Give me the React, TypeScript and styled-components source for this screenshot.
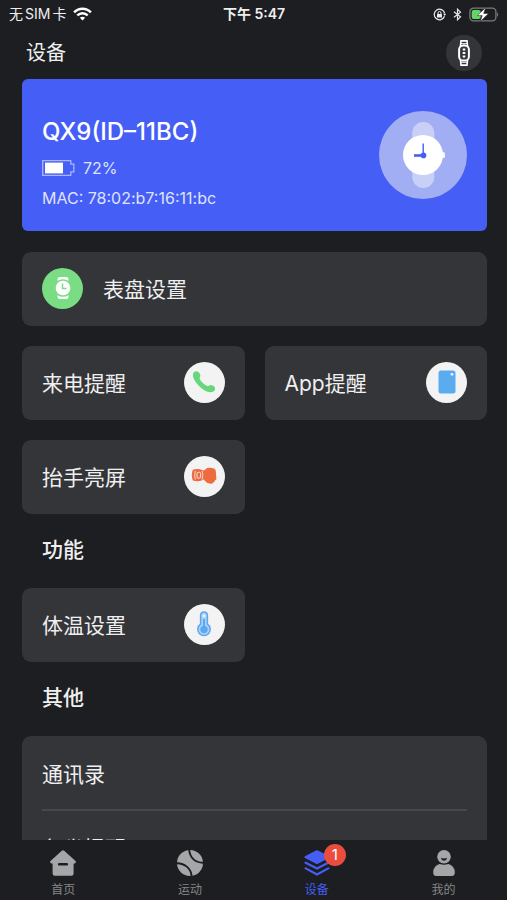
import React from "react";
import styled, { createGlobalStyle } from "styled-components";

const GlobalStyle = createGlobalStyle`
  * { box-sizing: border-box; }
  body {
    margin: 0;
    background: #1d1e21;
    color: #efeff0;
    font-family: Inter, "Noto Sans CJK SC", sans-serif;
  }
  button { font: inherit; color: inherit; border: 0; padding: 0; background: none; cursor: pointer; }
  h1, h2, p { margin: 0; }
  svg { display: block; flex: none; }
`;

const Screen = styled.div`
  height: 100vh;
  display: flex;
  flex-direction: column;
  overflow: hidden;
`;

const StatusBar = styled.div`
  flex: none;
  height: 28px;
  padding: 0 8px 0 9px;
  display: grid;
  grid-template-columns: 1fr auto 1fr;
  align-items: center;
  font-size: 14px;
  line-height: 20px;
`;

const StatusGroup = styled.div<{ $end?: boolean }>`
  display: flex;
  align-items: center;
  gap: 7px;
  justify-content: ${(p) => (p.$end ? "flex-end" : "flex-start")};
`;

const Carrier = styled.span`
  display: flex;
  gap: 2px;
`;

const Clock = styled.time`
  font-weight: 600;
`;

const Header = styled.header`
  flex: none;
  height: 51px;
  padding: 0 25px 2px 26px;
  display: flex;
  align-items: center;
  justify-content: space-between;
`;

const Title = styled.h1`
  font-size: 20px;
  line-height: 28px;
  font-weight: 400;
`;

const BandButton = styled.button`
  width: 36px;
  height: 36px;
  border-radius: 50%;
  background: #343538;
  display: grid;
  place-items: center;
`;

const Content = styled.main`
  flex: 1;
  min-height: 0;
  overflow: hidden;
  padding: 0 20px 0 22px;
`;

const DeviceCard = styled.section`
  height: 152px;
  margin-bottom: 21px;
  padding: 0 20px;
  border-radius: 6px;
  background: #455ef5;
  display: flex;
  align-items: center;
  justify-content: space-between;
`;

const DeviceInfo = styled.div`
  padding-top: 14px;
  display: flex;
  flex-direction: column;
  gap: 6px;
`;

const DeviceName = styled.h2`
  font-size: 24px;
  line-height: 36px;
  font-weight: 500;
  color: #fff;
`;

const DeviceLine = styled.p`
  display: flex;
  align-items: center;
  gap: 8px;
  font-size: 16px;
  line-height: 24px;
  color: #dfe3fd;
`;

const Tiles = styled.div`
  display: grid;
  grid-template-columns: 1fr 1fr;
  gap: 20px;
`;

const Tile = styled.button<{ $wide?: boolean }>`
  grid-column: ${(p) => (p.$wide ? "1 / -1" : "auto")};
  height: 74px;
  padding: 0 20px 2px;
  border-radius: 9px;
  background: #343538;
  display: flex;
  align-items: center;
  justify-content: ${(p) => (p.$wide ? "flex-start" : "space-between")};
  gap: 20px;
  font-size: 21px;
  line-height: 30px;
`;

const TileLabel = styled.span`
  padding-top: 3px;
`;

const Disc = styled.span<{ $color?: string }>`
  width: 41px;
  height: 41px;
  border-radius: 50%;
  background: ${(p) => p.$color ?? "#f3f3f3"};
  display: grid;
  place-items: center;
`;

const SectionTitle = styled.h2`
  height: 74px;
  padding: 0 20px 3px;
  display: flex;
  align-items: center;
  font-size: 21px;
  line-height: 30px;
  font-weight: 500;
`;

const List = styled.div`
  padding: 2px 20px 0;
  border-radius: 9px;
  background: #343538;
`;

const ListRow = styled.button`
  width: 100%;
  height: 73px;
  padding-top: 2px;
  display: flex;
  align-items: center;
  border-bottom: 2px solid #47484b;
  font-size: 21px;
  line-height: 30px;

  &:last-child { border-bottom: 0; }
`;

const TabBar = styled.nav`
  flex: none;
  height: 60px;
  display: grid;
  grid-template-columns: repeat(4, 1fr);
`;

const Tab = styled.button<{ $active?: boolean }>`
  display: flex;
  flex-direction: column;
  align-items: center;
  gap: 4px;
  padding-top: 10px;
  font-size: 12px;
  line-height: 20px;
  color: ${(p) => (p.$active ? "#455ef5" : "#858689")};
`;

const TabIcon = styled.span`
  position: relative;
  color: #a5a6a8;
`;

const Badge = styled.span`
  position: absolute;
  top: -6px;
  left: 20px;
  width: 22px;
  height: 22px;
  border-radius: 50%;
  background: #ea4d3e;
  color: #fff;
  font-size: 15px;
  line-height: 22px;
  text-align: center;
`;

const WifiIcon = () => (
  <svg width="19" height="14" viewBox="0 0 19 14" fill="none" stroke="#fff" strokeWidth="2.5">
    <path d="M1.1 5.3C6 .4 13 .4 17.9 5.3" />
    <path d="M4.3 8.4c3-2.9 7.4-2.9 10.4 0" />
    <path d="M9.5 13.4 6.9 10.7c1.5-1.4 3.7-1.4 5.2 0z" fill="#fff" stroke="none" />
  </svg>
);

const RotationLockIcon = () => (
  <svg width="13" height="13" viewBox="0 0 13 13" fill="none" stroke="#ededed">
    <path d="M11.7 5.3A5.3 5.3 0 1 0 11.5 8.3" strokeWidth="1.2" />
    <path d="M10 5.7h3l-1.2 2.4z" fill="#ededed" stroke="none" />
    <rect x="4" y="6" width="5" height="3.6" rx=".6" fill="#ededed" stroke="none" />
    <path d="M5 6V5a1.5 1.5 0 0 1 3 0v1" strokeWidth="1" />
  </svg>
);

const BluetoothIcon = () => (
  <svg width="9" height="13" viewBox="0 0 9 13" fill="none" stroke="#e4e4e4" strokeWidth="1.2">
    <path d="m1 3.7 6.5 5.2-3 2.9V1.2l3 2.9L1 9.3" />
  </svg>
);

const ChargingIcon = () => (
  <svg width="30" height="15" viewBox="0 0 30 15">
    <rect x=".9" y="1.2" width="26" height="12.6" rx="3.6" fill="none" stroke="#7b7c7e" strokeWidth="1.3" />
    <path d="M28 5.200q2.200 2.300 0 4.600z" fill="#7b7c7e" />
    <rect x="2.700" y="3" width="9" height="9" rx="2" fill="#62d665" />
    <path d="M16.700.4 8.400 8.600h4.800l-2 6 8.400-8.200h-4.900z" fill="#fff" stroke="#1d1e21" strokeWidth=".5" />
  </svg>
);

const BandIcon = () => (
  <svg width="14" height="26" viewBox="0 0 14 26" fill="none" stroke="#fff">
    <path d="M3.4 6.5 4 .9h6l.6 5.600M3.4 19.500l.6 5.600h6l.6-5.600" strokeWidth="1.6" />
    <path d="M3.500 3.700h7M3.500 22.300h7" strokeWidth="1" />
    <rect x="2.100" y="5.400" width="9.800" height="15.200" rx="4.200" strokeWidth="2" />
    <path d="M5.700 9.400h2.600M5.700 13h2.600M5.700 16.600h2.600" strokeWidth="2" />
  </svg>
);

const BatteryIcon = () => (
  <svg width="33" height="16" viewBox="0 0 33 16">
    <path d="M.7.7H28.800v3.500h3v7.600h-3v3.500H.7z" fill="none" stroke="#aab5fb" strokeWidth="1.300" />
    <rect x="3" y="2.600" width="18" height="10.800" fill="#fff" />
  </svg>
);

const WatchPicture = () => (
  <svg width="88" height="88" viewBox="0 0 88 88">
    <circle cx="44" cy="44" r="44" fill="#a2aef3" />
    <rect x="33.300" y="11" width="22" height="66" rx="11" fill="#c9d0f8" />
    <rect x="62" y="41" width="4" height="6" rx="1.500" fill="#f3f5ff" />
    <circle cx="44" cy="44" r="20" fill="#fff" />
    <path d="M44.200 32.500v12" stroke="#455ef5" fill="none" strokeWidth="1.400" />
    <path d="M44 44.500h-9" stroke="#455ef5" fill="none" strokeWidth="2.600" />
    <circle cx="44.500" cy="44.400" r="2.800" fill="#455ef5" />
  </svg>
);

const DialIcon = () => (
  <svg width="16" height="24" viewBox="0 0 16 24">
    <path d="M2.500 4.800V3.200Q2.500 1 4.700 1h6.600Q13.500 1 13.500 3.200v1.600Q8 1.500 2.500 4.800zM2.500 19.200v1.600Q2.500 23 4.700 23h6.600q2.200 0 2.200-2.200v-1.600Q8 22.500 2.500 19.200z" fill="#fff" />
    <circle cx="8" cy="12" r="7.300" fill="#fff" />
    <path d="M7.500 7.500v5h4" fill="none" stroke="#7add83" strokeWidth="1.500" />
  </svg>
);

const PhoneIcon = () => (
  <svg width="24" height="24" viewBox="0 0 24 24" fill="#67d77e">
    <path d="M1.400 3.200C2.300 1.300 4.700.6 6.600 2.200c1.500 1.200 2.300 3 1.500 4.600-.5 1.100-.8 1.700.1 3.100 1.700 2.500 4 4.500 6.600 5.800 1.200.6 1.600.2 2.500-.3 2-1.100 4.500.1 5.400 1.800.8 1.600.3 3.400-1.300 4.300-2.500 1.400-6.400.7-10.900-2.600C6 15.600 2.400 11 1.300 7.200c-.4-1.500-.4-2.900.1-4z" />
  </svg>
);

const TabletIcon = () => (
  <svg width="18" height="24" viewBox="0 0 18 24">
    <rect x=".5" y=".5" width="17" height="23" rx="2.500" fill="#5aabef" />
    <circle cx="14" cy="4.300" r="1.400" fill="#f3f3f3" />
  </svg>
);

const WristIcon = () => (
  <svg width="26" height="18" viewBox="0 0 26 18" fill="#ed6b40">
    <path d="M1.800 2.800Q6.500 1.400 10.500 2.800L13 3.500 16 1Q20 .2 23.500 1.700q1.200.5 1.300 2.600l.6 7.700q0 1-1.400 1.300-.1 2-1.800 2.100-.5 1.400-2.200 1.300l-3.700-.6L12.500 12.600 10.500 13.500Q6.500 14.900 1.800 13.400Q-.2 8 1.800 2.800z" />
    <path d="M4.300 3.800q-1.300 4.400 0 8.700M11.200 3.800q1.200 4.400 0 8.700" fill="none" stroke="#f3f3f3" strokeWidth=".8" />
    <rect x="6" y="5.300" width="3.600" height="5.800" rx="1.200" fill="none" stroke="#f3f3f3" strokeWidth=".9" />
  </svg>
);

const ThermometerIcon = () => (
  <svg width="16" height="26" viewBox="0 0 16 26" fill="none" stroke="#5ca8ef">
    <path d="M4.600 13.200V4.300a3.400 3.400 0 0 1 6.800 0v8.900a6.200 6.200 0 1 1-6.800 0z" strokeWidth="1.500" fill="#a9d2f8" />
    <circle cx="8" cy="18.500" r="3.300" fill="#5ca8ef" strokeWidth="1" />
    <path d="M8 8v10" strokeWidth="2" />
    <circle cx="8" cy="4.800" r="1.500" fill="#f3f3f3" stroke="none" />
  </svg>
);

const HomeIcon = () => (
  <svg width="26" height="26" viewBox="0 0 26 26" fill="currentColor">
    <path fillRule="evenodd" d="M11.800.7q1.200-1 2.400 0L25.500 11q1.100 1.600-.7 2.500H23.600V23.500q0 2.200-2.200 2.200H4.800q-2.200 0-2.200-2.200V13.500H1.200Q-.6 12.600.5 11zM8.600 13q-1.400 1.300 0 2.600h8.800q1.400-1.300 0-2.600z" />
  </svg>
);

const BallIcon = () => (
  <svg width="26" height="26" viewBox="0 0 26 26">
    <circle cx="13" cy="13" r="13" fill="currentColor" />
    <path d="M12.200 0C12.800 7.500 18 12.500 26 12.800M0 13.200C8 13.500 14 18.500 14.600 26" stroke="#1d1e21" fill="none" strokeWidth="1.900" />
  </svg>
);

const LayersIcon = () => (
  <svg width="26" height="26" viewBox="0 0 26 26" fill="#455ef5">
    <path d="M12 .4q1-.5 2 0L25.500 6.400v1.400L14 13.700q-1 .5-2 0L.5 7.800V6.400z" />
    <path d="M.8 12.300 13 18.600l12.200-6.300M.8 17.900 13 24.400 25.200 17.900" stroke="#455ef5" strokeWidth="2.200" fill="none" />
  </svg>
);

const PersonIcon = () => (
  <svg width="26" height="26" viewBox="0 0 26 26" fill="currentColor">
    <circle cx="13" cy="6.800" r="6.800" />
    <path d="M10 7.800q3 1.200 6 0-.5 3-3 3t-3-3z" fill="#1d1e21" />
    <path d="M8.500 14q4.500 1.600 9 0Q23.800 16 23.800 22.500q0 3.500-3.200 3.500H5.400q-3.200 0-3.200-3.500Q2.200 16 8.500 14z" />
  </svg>
);

const tabs = [
  { label: "首页", icon: <HomeIcon /> },
  { label: "运动", icon: <BallIcon /> },
  { label: "设备", icon: <LayersIcon />, active: true, badge: 1 },
  { label: "我的", icon: <PersonIcon /> },
];

export default function App() {
  return (
    <Screen>
      <GlobalStyle />
      <StatusBar>
        <StatusGroup>
          <Carrier>
            <span>无</span>
            <span>SIM</span>
            <span>卡</span>
          </Carrier>
          <WifiIcon />
        </StatusGroup>
        <Clock>下午 5:47</Clock>
        <StatusGroup $end>
          <RotationLockIcon />
          <BluetoothIcon />
          <ChargingIcon />
        </StatusGroup>
      </StatusBar>
      <Header>
        <Title>设备</Title>
        <BandButton aria-label="手环">
          <BandIcon />
        </BandButton>
      </Header>
      <Content>
        <DeviceCard>
          <DeviceInfo>
            <DeviceName>QX9(ID–11BC)</DeviceName>
            <DeviceLine>
              <BatteryIcon />
              72%
            </DeviceLine>
            <DeviceLine>MAC: 78:02:b7:16:11:bc</DeviceLine>
          </DeviceInfo>
          <WatchPicture />
        </DeviceCard>
        <Tiles>
          <Tile $wide>
            <Disc $color="#7add83"><DialIcon /></Disc>
            <TileLabel>表盘设置</TileLabel>
          </Tile>
          <Tile>
            <TileLabel>来电提醒</TileLabel>
            <Disc><PhoneIcon /></Disc>
          </Tile>
          <Tile>
            <TileLabel>App提醒</TileLabel>
            <Disc><TabletIcon /></Disc>
          </Tile>
          <Tile>
            <TileLabel>抬手亮屏</TileLabel>
            <Disc><WristIcon /></Disc>
          </Tile>
        </Tiles>
        <SectionTitle>功能</SectionTitle>
        <Tiles>
          <Tile>
            <TileLabel>体温设置</TileLabel>
            <Disc><ThermometerIcon /></Disc>
          </Tile>
        </Tiles>
        <SectionTitle>其他</SectionTitle>
        <List>
          <ListRow>通讯录</ListRow>
          <ListRow>久坐提醒</ListRow>
        </List>
      </Content>
      <TabBar>
        {tabs.map((tab) => (
          <Tab key={tab.label} $active={tab.active} aria-current={tab.active ? "page" : undefined}>
            <TabIcon>
              {tab.icon}
              {tab.badge && <Badge>{tab.badge}</Badge>}
            </TabIcon>
            {tab.label}
          </Tab>
        ))}
      </TabBar>
    </Screen>
  );
}
